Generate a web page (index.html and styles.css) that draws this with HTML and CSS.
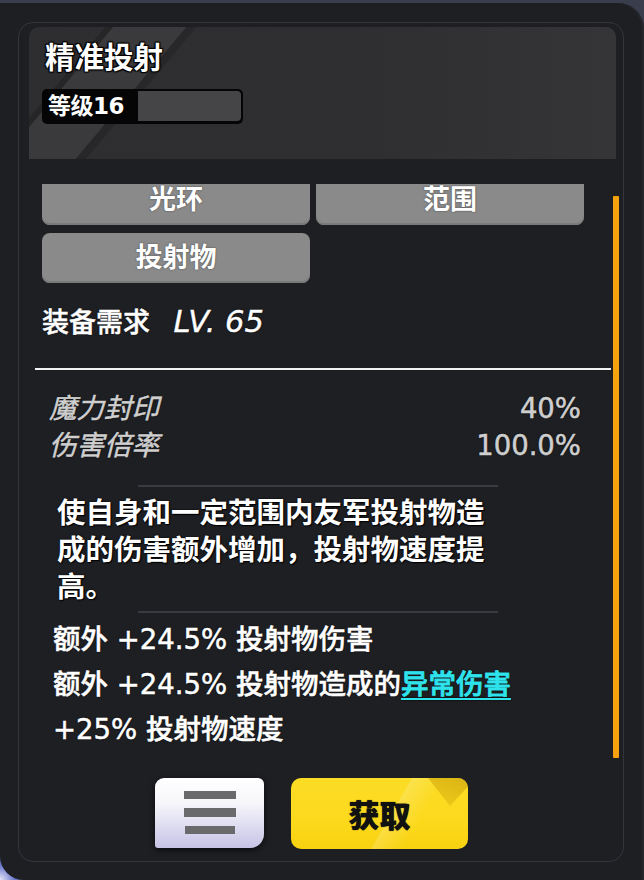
FILE: index.html
```html
<!DOCTYPE html>
<html lang="zh">
<head>
<meta charset="utf-8">
<title>精准投射</title>
<link rel="stylesheet" href="styles.css">
</head>
<body>
<div class="panel">
  <div class="frame">
    <header class="head">
      <h1 class="title">精准投射</h1>
      <div class="level">
        <span class="level-label">等级16</span>
        <span class="level-fill"></span>
      </div>
    </header>

    <div class="scroll">
      <div class="scroll-content">
        <div class="tags">
          <div class="tag">光环</div>
          <div class="tag">范围</div>
          <div class="tag">投射物</div>
        </div>
        <p class="req">装备需求 <span class="lv">LV. 65</span></p>
        <div class="rule"></div>
        <div class="stats">
          <div class="stat"><span class="stat-name">魔力封印</span><span>40%</span></div>
          <div class="stat"><span class="stat-name">伤害倍率</span><span>100.0%</span></div>
        </div>
        <div class="sep"></div>
        <p class="desc">使自身和一定范围内友军投射物造成的伤害额外增加，投射物速度提高。</p>
        <div class="sep sep-bottom"></div>
        <ul class="effects">
          <li>额外 +24.5% 投射物伤害</li>
          <li>额外 +24.5% 投射物造成的<span class="link">异常伤害</span></li>
          <li>+25% 投射物速度</li>
        </ul>
      </div>
      <div class="scrollbar"><div class="thumb"></div></div>
    </div>

    <div class="actions">
      <button class="btn-menu" aria-label="菜单">
        <svg width="52" height="44" viewBox="0 0 52 44">
          <rect x="0" y="0" width="52" height="8" fill="#6a6a6c"/>
          <rect x="0" y="17" width="52" height="9" fill="#6a6a6c"/>
          <rect x="1" y="35" width="50" height="8" fill="#6a6a6c"/>
        </svg>
      </button>
      <button class="btn-get">获取</button>
    </div>
  </div>
</div>
</body>
</html>
```

FILE: styles.css
```css
* { box-sizing: border-box; }

html, body {
  margin: 0;
  padding: 0;
}

body {
  width: 644px;
  height: 880px;
  overflow: hidden;
  background: radial-gradient(circle at 0 100%, #e6e8f6 0, #6f7bd0 14px, #3a3d4b 30px);
  font-family: "DejaVu Sans", "Noto Sans CJK SC", sans-serif;
  color: #fff;
}

.panel {
  margin-top: 3px;
  height: 877px;
  background: #1e1f23;
  border-radius: 0 26px 0 24px;
  padding: 19px 20px 18px 18px;
  box-shadow: inset -2px 0 0 #26272c;
}

.frame {
  height: 840px;
  border: 1px solid #35363c;
  border-radius: 15px;
  display: flex;
  flex-direction: column;
}

/* header */
.head {
  margin: 4px 7px 0 10px;
  height: 132px;
  border-radius: 10px 10px 0 0;
  padding: 9px 14px 0 16px;
  background:
    linear-gradient(130deg, transparent 0, transparent 58px, rgba(0,0,0,0.18) 59px, rgba(0,0,0,0.18) 64px, rgba(255,255,255,0.06) 65px, rgba(255,255,255,0.06) 120px, rgba(0,0,0,0.15) 121px, rgba(0,0,0,0.15) 128px, transparent 129px),
    linear-gradient(90deg, #2e2e30 0%, #2f2f31 60%, #353537 100%);
}

.title {
  margin: 0;
  font-family: "Noto Sans CJK SC", sans-serif;
  font-size: 29.5px;
  line-height: 38px;
  font-weight: 700;
  text-shadow: 0 0 2px #000, 1px 1px 1px #000, -1px -1px 1px #000, 1px -1px 1px #000, -1px 1px 1px #000;
}

.level {
  margin: 15px 0 0 -3px;
  width: 201px;
  height: 35px;
  background: #050505;
  border-radius: 5px;
  padding: 2px 2px 3px 6px;
  display: flex;
  align-items: center;
}

.level-label {
  font-size: 23px;
  font-weight: 700;
  width: 90px;
  line-height: 30px;
  letter-spacing: -0.5px;
  text-shadow: 0 0 2px #000;
}

.level-fill {
  flex: 1;
  align-self: stretch;
  background: #454547;
  border-radius: 0 4px 4px 0;
}

/* scroll area */
.scroll {
  margin-top: 25px;
  height: 574px;
  display: flex;
  overflow: hidden;
}

.scroll-content {
  flex: 1;
  min-width: 0;
  margin-top: -9px;
}

.scrollbar {
  width: 6px;
  margin-right: 4px;
  padding-top: 12px;
  display: flex;
}

.thumb {
  flex: 1;
  background: #f4a30e;
  border-radius: 1px;
}

.tags {
  display: grid;
  grid-template-columns: 268px 268px;
  column-gap: 6px;
  row-gap: 8px;
  padding-left: 23px;
}

.tag {
  height: 50px;
  background: #8a8a8b;
  border-radius: 8px;
  box-shadow: inset 0 -2px 0 #7a7a7b;
  text-align: center;
  font-size: 27px;
  font-weight: 700;
  line-height: 50px;
  text-shadow: 0 0 2px rgba(0,0,0,0.5);
}

.req {
  margin: 20px 0 0 23px;
  font-size: 27px;
  line-height: 38px;
  font-weight: 500;
  -webkit-text-stroke: 0.4px #fff;
  text-shadow: 0 0 2px #000;
}

.lv {
  font-size: 30.5px;
  font-style: italic;
  font-weight: 400;
  margin-left: 15px;
}

.rule {
  margin: 26px 2px 0 16px;
  height: 2px;
  background: #f2f2f2;
}

.stats {
  margin: 20px 32px 0 30px;
}

.stat {
  display: flex;
  justify-content: space-between;
  font-size: 27.5px;
  line-height: 37px;
  color: #cfcfcf;
  -webkit-text-stroke: 0.5px #cfcfcf;
  text-shadow: 0 0 2px #000;
}

.stat-name {
  font-style: italic;
}

.sep {
  margin: 21px 0 0 119px;
  width: 360px;
  height: 2px;
  background: #3a3b40;
}

.desc {
  margin: 8px 0 0 38px;
  width: 15.4em;
  font-size: 28.5px;
  line-height: 37px;
  font-weight: 700;
  text-shadow: 0 0 2px #000, 1px 1px 1px #000;
}

.sep-bottom {
  margin-top: 5px;
}

.effects {
  list-style: none;
  margin: 4px 0 0 34px;
  padding: 0;
}

.effects li {
  font-size: 27.5px;
  line-height: 45px;
  font-weight: 500;
  white-space: nowrap;
  -webkit-text-stroke: 0.5px #fff;
  text-shadow: 0 0 2px #000;
}

.link {
  color: #2fe3ec;
  -webkit-text-stroke: 0.5px #2fe3ec;
  text-decoration: underline;
  text-underline-offset: 4px;
  text-decoration-thickness: 2px;
}

/* actions */
.actions {
  margin-top: 20px;
  display: flex;
  justify-content: center;
  gap: 27px;
  padding-right: 19px;
}

.btn-menu {
  width: 109px;
  height: 70px;
  border: 0;
  border-radius: 9px 6px 14px 3px;
  background: linear-gradient(180deg, #ffffff 0%, #f7f7fb 35%, #c7c3e6 100%);
  box-shadow: 0 2px 6px rgba(0,0,0,0.7);
  display: flex;
  align-items: center;
  justify-content: center;
  padding: 0;
}

.btn-get {
  position: relative;
  overflow: hidden;
  width: 177px;
  height: 71px;
  border: 0;
  border-radius: 10px;
  background:
    linear-gradient(120deg, transparent 0, transparent 55%, rgba(255,255,255,0.18) 56%, transparent 70%),
    linear-gradient(180deg, #fbdc25 0%, #fdd91d 60%, #f7d20f 100%);
  font-family: "Noto Sans CJK SC", sans-serif;
  font-size: 31px;
  font-weight: 900;
  color: #111;
  text-shadow: 0 0 1px #000;
  padding: 0;
}

.btn-get::after {
  content: "";
  position: absolute;
  top: 0;
  right: 0;
  width: 40px;
  height: 28px;
  background: linear-gradient(200deg, #d2aa10, #ecc818);
  clip-path: polygon(0 0, 100% 0, 100% 30%, 55% 100%);
  opacity: 0.8;
}
```
